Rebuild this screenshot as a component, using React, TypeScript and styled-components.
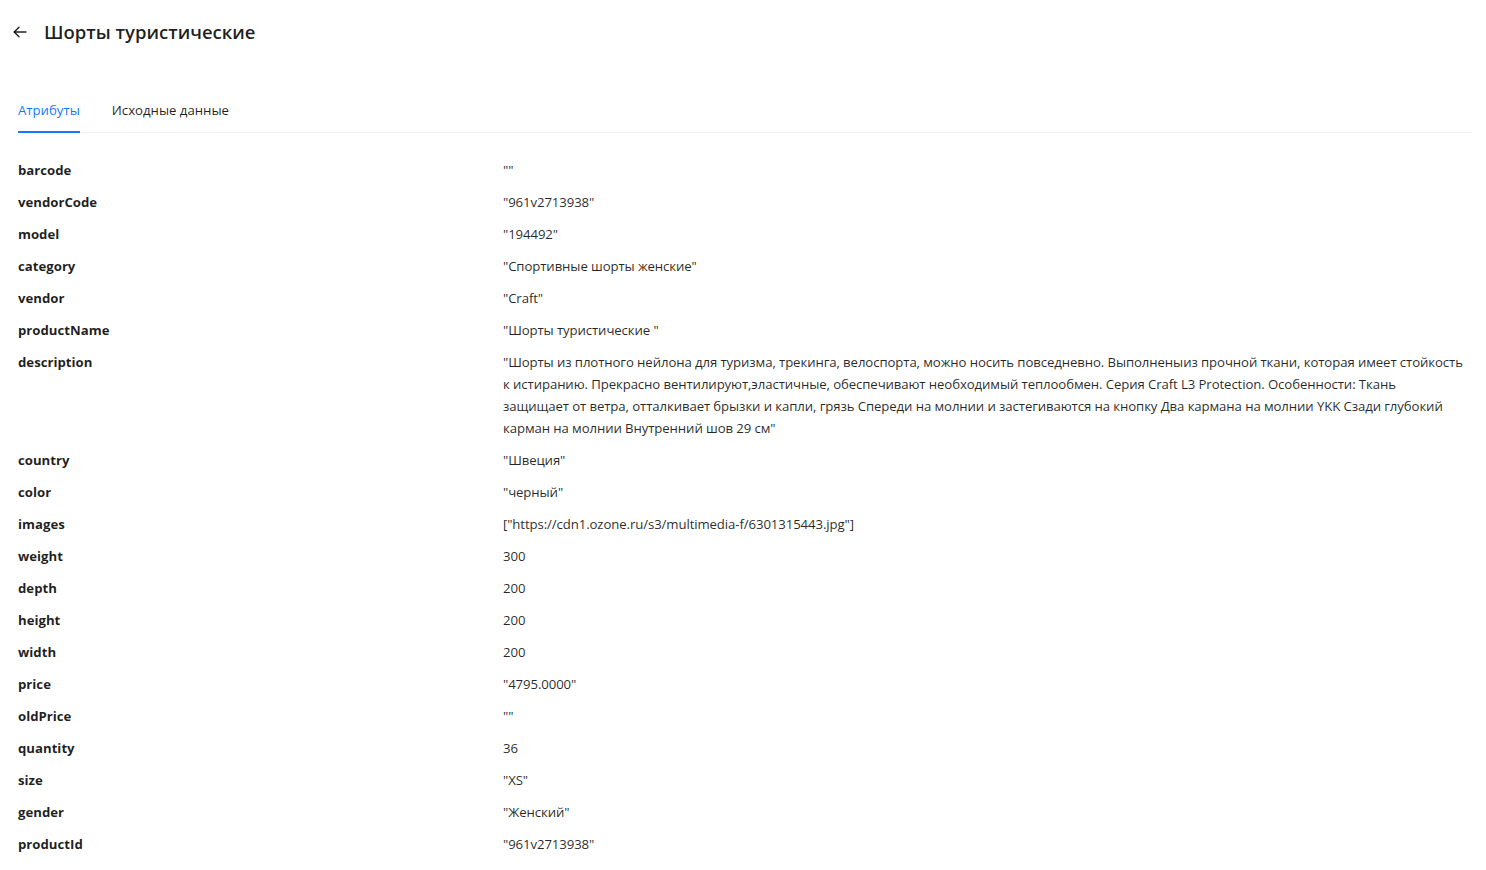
import React from "react";
import styled, { createGlobalStyle } from "styled-components";

const Global = createGlobalStyle`
  html, body { margin: 0; padding: 0; background: #fff; }
  body { font-family: "Open Sans", "Noto Sans", sans-serif; color: rgba(0,0,0,0.88); }
  * { box-sizing: border-box; }
`;

const Page = styled.div`
  padding: 18px 14px 20px 18px;
`;

const Header = styled.div`
  display: flex;
  align-items: center;
  gap: 15px;
  height: 28px;
  margin-left: -7px;
`;

const BackButton = styled.button`
  border: none;
  background: transparent;
  padding: 0;
  width: 18px;
  height: 18px;
  display: flex;
  align-items: center;
  justify-content: center;
  color: rgba(0,0,0,0.88);
  cursor: pointer;
`;

const Title = styled.h1`
  margin: 0;
  font-size: 18.5px;
  font-weight: 600;
  line-height: 28px;
  color: rgba(0,0,0,0.88);
`;

const TabBar = styled.div`
  display: flex;
  gap: 32px;
  margin-top: 42px;
  border-bottom: 1px solid #f0f0f0;
`;

const Tab = styled.div<{ $active?: boolean }>`
  position: relative;
  padding: 11px 0;
  font-size: 13.2px;
  line-height: 22px;
  color: ${(p) => (p.$active ? "#1677ff" : "rgba(0,0,0,0.88)")};
  cursor: pointer;
  &::after {
    content: "";
    position: absolute;
    left: 0;
    right: 0;
    bottom: -1px;
    height: 2px;
    background: ${(p) => (p.$active ? "#1677ff" : "transparent")};
  }
`;

const List = styled.div`
  margin-top: 21px;
  display: grid;
  grid-template-columns: 485px 1fr;
`;

const Label = styled.div`
  font-size: 13.2px;
  line-height: 22px;
  padding: 5px 0;
  font-weight: 700;
  color: rgba(0,0,0,0.88);
`;

const Value = styled.div`
  font-size: 13.2px;
  line-height: 22px;
  padding: 5px 7px 5px 0;
  letter-spacing: -0.1px;
  color: rgba(0,0,0,0.85);
  word-break: break-word;
`;

const rows: [string, string][] = [
  ["barcode", '""'],
  ["vendorCode", '"961v2713938"'],
  ["model", '"194492"'],
  ["category", '"Спортивные шорты женские"'],
  ["vendor", '"Craft"'],
  ["productName", '"Шорты туристические "'],
  [
    "description",
    '"Шорты из плотного нейлона для туризма, трекинга, велоспорта, можно носить повседневно. Выполненыиз прочной ткани, которая имеет стойкость к истиранию. Прекрасно вентилируют,эластичные, обеспечивают необходимый теплообмен. Серия Craft L3 Protection. Особенности: Ткань защищает от ветра, отталкивает брызки и капли, грязь Спереди на молнии и застегиваются на кнопку Два кармана на молнии YKK Сзади глубокий карман на молнии Внутренний шов 29 см"',
  ],
  ["country", '"Швеция"'],
  ["color", '"черный"'],
  ["images", '["https://cdn1.ozone.ru/s3/multimedia-f/6301315443.jpg"]'],
  ["weight", "300"],
  ["depth", "200"],
  ["height", "200"],
  ["width", "200"],
  ["price", '"4795.0000"'],
  ["oldPrice", '""'],
  ["quantity", "36"],
  ["size", '"XS"'],
  ["gender", '"Женский"'],
  ["productId", '"961v2713938"'],
];

export default function App() {
  return (
    <Page>
      <Global />
      <Header>
        <BackButton aria-label="back">
          <svg width="16" height="16" viewBox="0 0 16 16" fill="none" stroke="currentColor" strokeWidth="1.4" strokeLinecap="round" strokeLinejoin="round">
            <path d="M14 8H2.5" />
            <path d="M7 3.2L2.2 8L7 12.8" />
          </svg>
        </BackButton>
        <Title>Шорты туристические</Title>
      </Header>
      <TabBar>
        <Tab $active>Атрибуты</Tab>
        <Tab>Исходные данные</Tab>
      </TabBar>
      <List>
        {rows.map(([k, v]) => (
          <React.Fragment key={k}>
            <Label>{k}</Label>
            <Value>{v}</Value>
          </React.Fragment>
        ))}
      </List>
    </Page>
  );
}
